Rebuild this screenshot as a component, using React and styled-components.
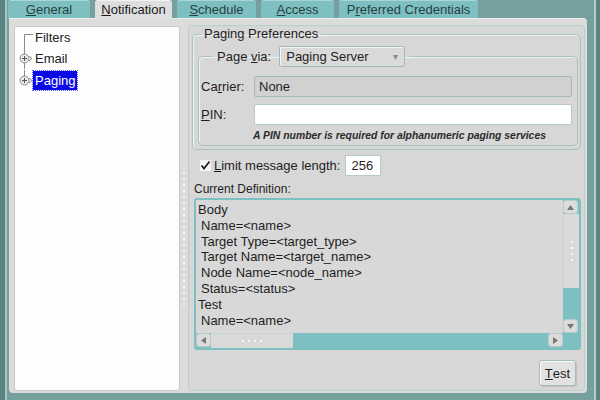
import React from "react";
import styled, { createGlobalStyle } from "styled-components";

const Global = createGlobalStyle`
	html, body { margin: 0; padding: 0; }
	body { font-family: "Liberation Sans", Arial, sans-serif; background: #76a09e; }
`;

const tabs = [
	{ label: "General", key: "G", width: 82 },
	{ label: "Notification", key: "N", width: 77, active: true },
	{ label: "Schedule", key: "S", width: 79 },
	{ label: "Access", key: "A", width: 73 },
	{ label: "Preferred Credentials", key: "r", width: 139 },
];

const definition = [
	{ text: "Body", indent: false },
	{ text: "Name=<name>", indent: true },
	{ text: "Target Type=<target_type>", indent: true },
	{ text: "Target Name=<target_name>", indent: true },
	{ text: "Node Name=<node_name>", indent: true },
	{ text: "Status=<status>", indent: true },
	{ text: "Test", indent: false },
	{ text: "Name=<name>", indent: true },
];

const Mnemonic = ({ text, char }) => {
	const i = text.indexOf(char);
	if (i < 0) return text;
	return (
		<>
			{text.slice(0, i)}
			<u>{text[i]}</u>
			{text.slice(i + 1)}
		</>
	);
};

const TreeIcon = ({ kind }) => (
	<svg width="15" height="21" viewBox="0 0 15 21">
		{kind === "first" && (
			<>
				<line x1="5.5" y1="7.5" x2="14" y2="7.5" stroke="#8a8a8a" />
				<line x1="5.5" y1="7.5" x2="5.5" y2="21" stroke="#8a8a8a" />
			</>
		)}
		{kind !== "first" && (
			<>
				<line x1="5.5" y1="0" x2="5.5" y2={kind === "last" ? 6 : 21} stroke="#8a8a8a" />
				<circle cx="5.5" cy="10.5" r="4.5" fill="#e8e8e8" stroke="#8a8a8a" />
				<line x1="3" y1="10.5" x2="8" y2="10.5" stroke="#555" />
				<line x1="5.5" y1="8" x2="5.5" y2="13" stroke="#555" />
				<path d="M10 8 L13 10.5 L10 13" fill="none" stroke="#8a8a8a" />
			</>
		)}
	</svg>
);

const App = () => {
	return (
		<Frame>
			<Global />
			<TabRow>
				{tabs.map((t) => (
					<Tab key={t.label} $active={t.active} $width={t.width}>
						<Mnemonic text={t.label} char={t.key} />
					</Tab>
				))}
			</TabRow>
			<Panel>
				<Tree>
					<TreeRow>
						<TreeIcon kind="first" />
						<TreeLabel>Filters</TreeLabel>
					</TreeRow>
					<TreeRow>
						<TreeIcon kind="mid" />
						<TreeLabel>Email</TreeLabel>
					</TreeRow>
					<TreeRow $tall>
						<TreeIcon kind="last" />
						<TreeLabel $selected>Paging</TreeLabel>
					</TreeRow>
				</Tree>
				<Splitter />
				<Content>
					<Group>
						<GroupTitle>Paging Preferences</GroupTitle>
						<InnerGroup>
							<InnerLegend>
								<span>
									Page <Mnemonic text="via:" char="v" />
								</span>
								<Select>
									Paging Server
									<Caret>▾</Caret>
								</Select>
							</InnerLegend>
							<FieldRow>
								<FieldLabel>
									<Mnemonic text="Carrier:" char="r" />
								</FieldLabel>
								<Field $readOnly>None</Field>
							</FieldRow>
							<FieldRow $gap>
								<FieldLabel>
									<Mnemonic text="PIN:" char="P" />
								</FieldLabel>
								<Field />
							</FieldRow>
							<Hint>A PIN number is required for alphanumeric paging services</Hint>
						</InnerGroup>
					</Group>
					<CheckRow>
						<CheckBox>
							<svg width="11" height="11" viewBox="0 0 11 11">
								<path d="M1.5 5.5 L4 8.5 L9.5 1.5" fill="none" stroke="#222" strokeWidth="1.8" />
							</svg>
						</CheckBox>
						<span>
							<Mnemonic text="Limit message length:" char="L" />
						</span>
						<SmallInput>256</SmallInput>
					</CheckRow>
					<DefLabel>Current Definition:</DefLabel>
					<TextBox>
						<TextLines>
							{definition.map((l, i) => (
								<TextLine key={i} $indent={l.indent}>
									{l.text}
								</TextLine>
							))}
						</TextLines>
						<VScroll>
							<ScrollBtn>
								<svg width="7" height="5" viewBox="0 0 7 5">
									<path d="M0 5 L3.5 0 L7 5 Z" fill="#777" />
								</svg>
							</ScrollBtn>
							<VThumb>
								<Grip $vertical />
							</VThumb>
							<Track />
							<ScrollBtn>
								<svg width="7" height="5" viewBox="0 0 7 5">
									<path d="M0 0 L3.5 5 L7 0 Z" fill="#777" />
								</svg>
							</ScrollBtn>
						</VScroll>
						<HScroll>
							<ScrollBtn>
								<svg width="5" height="7" viewBox="0 0 5 7">
									<path d="M5 0 L0 3.5 L5 7 Z" fill="#777" />
								</svg>
							</ScrollBtn>
							<HThumb>
								<Grip />
							</HThumb>
							<Track />
							<ScrollBtn>
								<svg width="5" height="7" viewBox="0 0 5 7">
									<path d="M0 0 L5 3.5 L0 7 Z" fill="#777" />
								</svg>
							</ScrollBtn>
						</HScroll>
						<Corner />
					</TextBox>
					<ButtonRow>
						<Button>
							<Mnemonic text="Test" char="T" />
						</Button>
					</ButtonRow>
				</Content>
			</Panel>
		</Frame>
	);
};

export default App;

const Frame = styled.div`
	width: 600px;
	height: 400px;
	box-sizing: border-box;
	padding: 0 13px 7px 9px;
	display: flex;
	flex-direction: column;
	background: #76a09e;
	box-shadow: inset 5px 0 #5b8583, inset 7px 0 #a7c6c4, inset -4px 0 #5b8583,
		inset -6px 0 #b4cfcd;
	color: #1e1e1e;
	font-size: 13px;
`;

const TabRow = styled.div`
	display: flex;
	align-items: flex-end;
	gap: 5px;
	height: 18px;
`;

const Tab = styled.div`
	width: ${(p) => p.$width}px;
	height: ${(p) => (p.$active ? 20 : 18)}px;
	margin-bottom: ${(p) => (p.$active ? -2 : 0)}px;
	box-sizing: border-box;
	display: flex;
	align-items: center;
	justify-content: center;
	padding-bottom: ${(p) => (p.$active ? 2 : 0)}px;
	background: ${(p) => (p.$active ? "#dedede" : "#7ec0c2")};
	border-top: 1px solid ${(p) => (p.$active ? "#f2f2f2" : "#a6d6d8")};
	border-radius: 3px 3px 0 0;
	color: ${(p) => (p.$active ? "#1a1a1a" : "#26403f")};
	font-size: 13px;
	position: relative;
	z-index: 1;
	&:first-child {
		margin-left: -1px;
	}
`;

const Panel = styled.div`
	flex: 1;
	display: flex;
	box-sizing: border-box;
	padding: 7px 2px 2px 5px;
	background: #dcdcdc;
	border-radius: 0 4px 4px 4px;
	border-top: 1px solid #eeeeee;
	min-height: 0;
`;

const Tree = styled.div`
	width: 166px;
	box-sizing: border-box;
	background: #fdfdfd;
	border: 1px solid #c9c9c9;
	border-radius: 3px;
	padding: 0 0 0 4px;
`;

const TreeRow = styled.div`
	display: flex;
	align-items: center;
	height: ${(p) => (p.$tall ? 22 : 21)}px;
	& svg {
		flex: none;
	}
`;

const TreeLabel = styled.span`
	font-size: 13px;
	padding: 2px 2px;
	margin-left: -1px;
	line-height: 15px;
	background: ${(p) => (p.$selected ? "#0a0ae6" : "transparent")};
	color: ${(p) => (p.$selected ? "#ffffff" : "#222222")};
	outline: ${(p) => (p.$selected ? "1px dotted #5c5cff" : "none")};
`;

const Splitter = styled.div`
	width: 8px;
	flex: none;
	margin: 144px 0 86px;
	background-image: radial-gradient(circle, #f6f6f6 1px, transparent 1.4px);
	background-size: 8px 6px;
`;

const Content = styled.div`
	flex: 1;
	display: flex;
	flex-direction: column;
	box-sizing: border-box;
	background: #d7d7d7;
	border: 1px solid #b6cfcf;
	border-radius: 4px;
	padding: 0 3px;
	margin-top: -1px;
`;

const Group = styled.fieldset`
	margin: 0;
	padding: 0 2px 3px 0;
	border: 1px solid #a9c3c3;
	border-radius: 5px;
	box-shadow: inset 1px 1px #eef4f4;
`;

const GroupTitle = styled.legend`
	margin-left: 8px;
	padding: 0 3px;
	font-size: 13px;
	line-height: 16px;
	color: #1e1e1e;
`;

const InnerGroup = styled.fieldset`
	margin: 4px 0 0 5px;
	padding: 9px 5px 3px 2px;
	border: 1px solid #a9c3c3;
	border-radius: 5px;
	box-shadow: inset 1px 1px #eef4f4;
`;

const InnerLegend = styled.legend`
	margin-left: 12px;
	padding: 0 4px;
	display: flex;
	align-items: center;
	gap: 8px;
	font-size: 13px;
`;

const Select = styled.div`
	width: 126px;
	height: 21px;
	box-sizing: border-box;
	display: flex;
	align-items: center;
	justify-content: space-between;
	padding: 0 6px;
	background: #dadada;
	border: 1px solid #9fb9b9;
	border-radius: 2px;
	box-shadow: inset 1px 1px #f4f4f4;
`;

const Caret = styled.span`
	color: #8a8a8a;
	font-size: 10px;
`;

const FieldRow = styled.div`
	display: flex;
	align-items: center;
	margin-top: ${(p) => (p.$gap ? 7 : 0)}px;
`;

const FieldLabel = styled.span`
	width: 53px;
	flex: none;
`;

const Field = styled.div`
	flex: 1;
	height: 21px;
	box-sizing: border-box;
	display: flex;
	align-items: center;
	padding-left: 4px;
	background: ${(p) => (p.$readOnly ? "#d1d1d1" : "#ffffff")};
	border: 1px solid ${(p) => (p.$readOnly ? "#a3b9b9" : "#b7caca")};
	border-radius: 2px;
`;

const Hint = styled.div`
	margin: 5px 0 0 52px;
	font-size: 10.4px;
	font-style: italic;
	font-weight: bold;
	line-height: 12px;
	color: #2a2a2a;
`;

const CheckRow = styled.div`
	display: flex;
	align-items: center;
	margin-top: 5px;
	padding-left: 8px;
	height: 21px;
`;

const CheckBox = styled.span`
	width: 11px;
	height: 11px;
	display: inline-flex;
	background: #f4f4f4;
	margin-right: 3px;
`;

const SmallInput = styled.div`
	width: 36px;
	height: 21px;
	box-sizing: border-box;
	margin-left: 5px;
	display: flex;
	align-items: center;
	padding-left: 5px;
	background: #ffffff;
	border: 1px solid #b7caca;
`;

const DefLabel = styled.div`
	margin: 6px 0 0 2px;
	font-size: 12px;
	line-height: 14px;
`;

const TextBox = styled.div`
	margin: 2px 0 0 2px;
	height: 152px;
	box-sizing: border-box;
	display: grid;
	grid-template-columns: 1fr 16px;
	grid-template-rows: 1fr 15px;
	background: #7ec0c2;
	border: 2px solid #7ec0c2;
	border-radius: 3px;
`;

const TextLines = styled.div`
	background: #d8d8d8;
	padding: 2px 0 0 2px;
	overflow: hidden;
`;

const TextLine = styled.div`
	font-size: 13px;
	line-height: 15.8px;
	padding-left: ${(p) => (p.$indent ? 3 : 0)}px;
	white-space: pre;
`;

const VScroll = styled.div`
	display: flex;
	flex-direction: column;
	background: #7ec0c2;
`;

const HScroll = styled.div`
	display: flex;
	background: #7ec0c2;
`;

const ScrollBtn = styled.div`
	flex: none;
	width: 15px;
	height: 14px;
	box-sizing: border-box;
	display: flex;
	align-items: center;
	justify-content: center;
	background: #dcdcdc;
	border: 1px solid #b9cccc;
	border-radius: 3px;
`;

const VThumb = styled.div`
	height: 74px;
	display: flex;
	align-items: center;
	justify-content: center;
	background: #d9d9d9;
	border-left: 1px solid #c4d4d4;
`;

const HThumb = styled.div`
	width: 82px;
	display: flex;
	align-items: center;
	justify-content: center;
	background: #d9d9d9;
	border-top: 1px solid #c4d4d4;
`;

const Grip = styled.div`
	width: ${(p) => (p.$vertical ? 6 : 24)}px;
	height: ${(p) => (p.$vertical ? 24 : 6)}px;
	background-image: radial-gradient(circle, #f8f8f8 1px, transparent 1.5px);
	background-size: 6px 6px;
`;

const Track = styled.div`
	flex: 1;
	background: #7ec0c2;
`;

const Corner = styled.div`
	background: #7ec0c2;
`;

const ButtonRow = styled.div`
	display: flex;
	justify-content: flex-end;
	margin: 10px 5px 0 0;
`;

const Button = styled.div`
	width: 37px;
	height: 26px;
	box-sizing: border-box;
	display: flex;
	align-items: center;
	justify-content: center;
	background: #e2e2e2;
	border: 1px solid #a7bcbc;
	border-radius: 3px;
	box-shadow: inset 1px 1px #fafafa, 1px 1px #c0c0c0;
	font-size: 13px;
`;
